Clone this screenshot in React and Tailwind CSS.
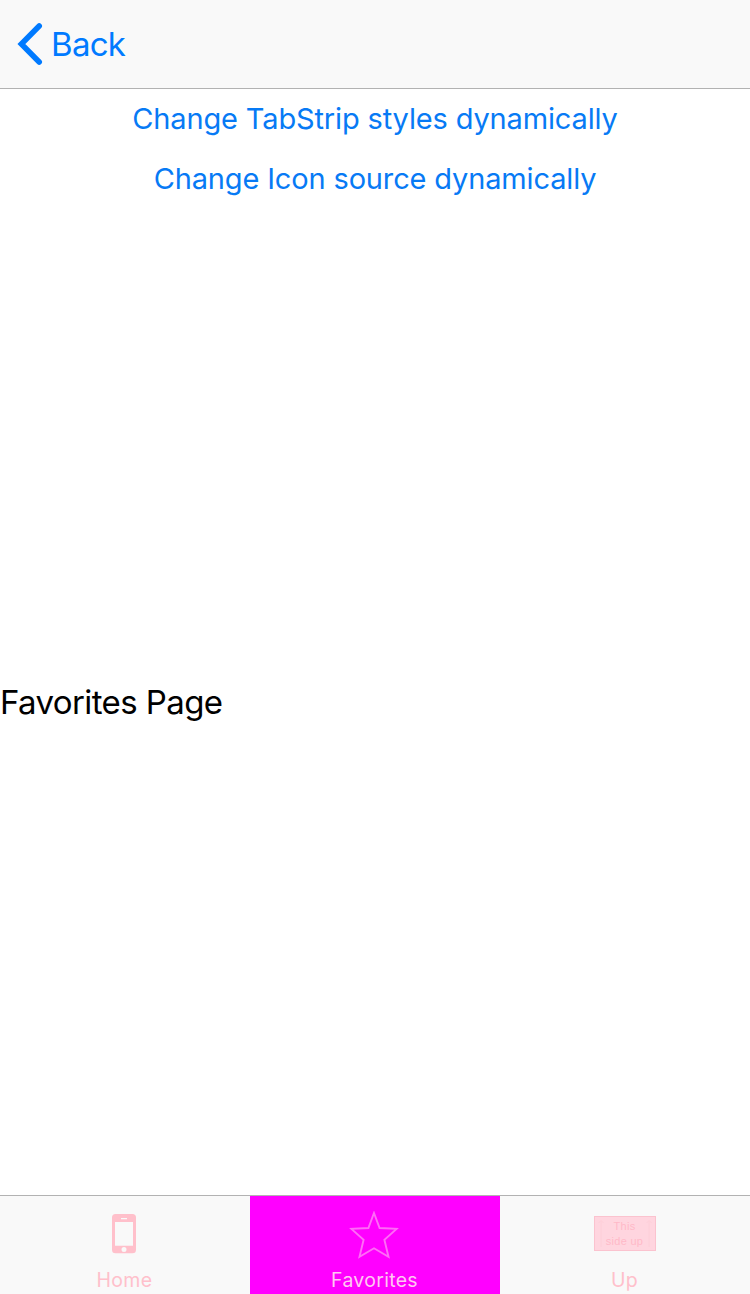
function PhoneIcon() {
  return (
    <svg className="block h-[40px] w-[24px]" viewBox="0 0 24 40">
      <path
        fill="#ffc0cb"
        fillRule="evenodd"
        d="M3.5 0h17A3.5 3.5 0 0 1 24 3.5v32.2a3.5 3.5 0 0 1-3.5 3.5h-17A3.5 3.5 0 0 1 0 35.7v-32.2A3.5 3.5 0 0 1 3.5 0ZM3 8v23.7h18V8ZM9 4.1v1.2h6v-1.2ZM12 33a2.5 2.5 0 1 0 0 5a2.5 2.5 0 1 0 0-5Z"
      />
    </svg>
  );
}

function StarIcon() {
  return (
    <svg className="block h-[48px] w-[50px]" viewBox="0 0 50 48">
      <path
        fill="none"
        stroke="#ff6cf6"
        strokeWidth="1.9"
        d="M25 2L30.6 17L47.6 17.9L35.4 28.8L39.5 45.8L25 37.3L10.5 45.8L14.6 28.8L2.4 17.9L19.4 17Z"
      />
    </svg>
  );
}

function BoxIcon() {
  return (
    <div className="ml-[2px] flex h-[35px] w-[62px] justify-between border border-[#fbc3cf] bg-[#ffd5df] px-[3px] pt-[2px] text-[#ffb9c8]">
      <svg className="h-[30px] w-[6px]" viewBox="0 0 6 30" fill="none" stroke="#fdced8">
        <path d="M.5 4L3 1.5L5.5 4M3 1.5V28" />
      </svg>
      <div className="whitespace-nowrap pr-[1px] text-center font-['Liberation_Sans',sans-serif] text-[11px] leading-[14.5px] tracking-[0.3px]">
        <div>This</div>
        <div>side up</div>
      </div>
      <svg className="h-[30px] w-[6px]" viewBox="0 0 6 30" fill="none" stroke="#fdced8">
        <path d="M.5 4L3 1.5L5.5 4M3 1.5V28" />
      </svg>
    </div>
  );
}

const tabs = [
  { label: "Home", Icon: PhoneIcon, tab: "text-[#ffc0cb]", icon: "pt-[18px]" },
  { label: "Favorites", Icon: StarIcon, tab: "bg-[#ff00ff] text-[#ffc8f0]", icon: "pt-[15px]" },
  { label: "Up", Icon: BoxIcon, tab: "text-[#ffc0cb]", icon: "pt-[20px]" },
];

export default function App() {
  return (
    <div className="flex h-[1294px] w-[750px] flex-col overflow-hidden bg-white font-['Inter',sans-serif]">
      <header className="flex h-[89px] shrink-0 items-center border-b border-[#b2b2b2] bg-[#f9f9f9] pl-[17px] text-[#007aff]">
        <svg className="h-[44px] w-[26px]" viewBox="0 0 26 44" fill="none">
          <path d="M22.2 4L4.4 22L22.2 40" stroke="currentColor" strokeWidth="5.6" strokeLinecap="round" />
        </svg>
        <button className="ml-[8px] text-[33px] leading-[40px] tracking-[-0.7px]">Back</button>
      </header>

      <main className="flex grow flex-col">
        <button className="h-[60px] text-[29px] leading-[60px] tracking-[-0.15px] text-[#077af5]">
          Change TabStrip styles dynamically
        </button>
        <button className="h-[60px] text-[29px] leading-[60px] tracking-[-0.15px] text-[#077af5]">
          Change Icon source dynamically
        </button>
        <div className="flex grow items-center">
          <p className="text-[33px] leading-[40px] tracking-[-0.6px] text-black">Favorites Page</p>
        </div>
      </main>

      <nav className="grid h-[99px] shrink-0 grid-cols-3 border-t border-[#b2b2b2] bg-[#f9f9f9]">
        {tabs.map(({ label, Icon, tab, icon }) => (
          <button key={label} className={`flex flex-col items-center pr-[2px] ${tab}`}>
            <div className={`h-[72px] ${icon}`}>
              <Icon />
            </div>
            <span className="pl-[1px] text-[19.5px] leading-[24px] tracking-[0.3px]">{label}</span>
          </button>
        ))}
      </nav>
    </div>
  );
}
